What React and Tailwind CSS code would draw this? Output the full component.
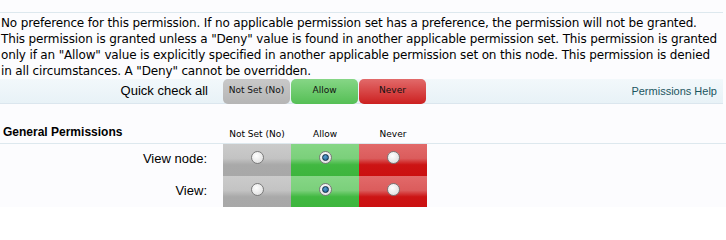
import React from 'react';

const cols = [
  { key: 'unset', label: 'Not Set (No)', cell: 'bg-[linear-gradient(to_bottom,#cbcbcb_0%,#c3c3c3_45%,#a9a9a9_65%,#a8a8a8_100%)]', btn: 'bg-[linear-gradient(to_bottom,#c9c9c9,#b5b5b5)]' },
  { key: 'allow', label: 'Allow', cell: 'bg-[linear-gradient(to_bottom,#86d686_0%,#7bd07b_45%,#41b841_65%,#3db53d_100%)]', btn: 'bg-[linear-gradient(to_bottom,#86d686,#55bf55)]' },
  { key: 'never', label: 'Never', cell: 'bg-[linear-gradient(to_bottom,#e26a6a_0%,#db5c5c_45%,#cc1414_65%,#cb1010_100%)]', btn: 'bg-[linear-gradient(to_bottom,#e26a6a,#cc2020)]' },
];

const perms = [
  { name: 'View node:', value: 'allow' },
  { name: 'View:', value: 'allow' },
];

function Radio({ checked }) {
  return (
    <span className="flex h-[13px] w-[13px] items-center justify-center rounded-full border border-[#7a7a7a] bg-[radial-gradient(circle_at_40%_35%,#ffffff,#d8d8d8)]">
      {checked && <span className="h-[7px] w-[7px] rounded-full border border-[#0c2c44] bg-[radial-gradient(circle_at_40%_35%,#5aa0d0,#1a5a8a)]" />}
    </span>
  );
}

export default function App() {
  return (
    <div className="h-[207px] w-[726px] overflow-hidden bg-[#fcfcfe] font-['DejaVu_Sans',sans-serif] text-[#000]">
      <div className="h-[12px]" />
      <div className="mr-[3px] whitespace-nowrap border-t border-[#dde8ee] pl-[1px] pt-[2px] text-[12px] leading-[16px] tracking-[-0.15px]">
        No preference for this permission. If no applicable permission set has a preference, the permission will not be granted.<br />
        This permission is granted unless a "Deny" value is found in another applicable permission set. This permission is granted<br />
        only if an "Allow" value is explicitly specified in another applicable permission set on this node. This permission is denied<br />
        in all circumstances. A "Deny" cannot be overridden.
      </div>

      <div className="mr-[3px] flex h-[25px] items-center border-b border-[#dbe6ee] bg-[linear-gradient(to_bottom,#f2f8fb,#e8f2f7)]">
        <div className="w-[223px] pr-[15px] text-right font-['Liberation_Sans',sans-serif] text-[13px]">Quick check all</div>
        {cols.map((c) => (
          <button
            key={c.key}
            type="button"
            className={`mr-[1px] flex h-[25px] w-[67px] items-center justify-center rounded-[5px] text-[9px] text-[#111] ${c.btn}`}
          >
            {c.label}
          </button>
        ))}
        <a className="ml-auto pr-[6px] font-['Liberation_Sans',sans-serif] text-[11px] text-[#1b5560]">Permissions Help</a>
      </div>

      <div className="mt-[16px] flex h-[24px] items-end border-b border-[#dde8ee] pb-[2px]">
        <div className="w-[223px] pl-[3px] font-['Liberation_Sans',sans-serif] text-[12px] font-bold">General Permissions</div>
        {cols.map((c) => (
          <div key={c.key} className="w-[68px] text-center text-[9px]">{c.label}</div>
        ))}
      </div>

      {perms.map((p) => (
        <div key={p.name} className="flex h-[32px] items-stretch">
          <div className="flex w-[223px] items-center justify-end pb-[3px] pr-[16px] font-['Liberation_Sans',sans-serif] text-[13px]">{p.name}</div>
          {cols.map((c) => (
            <div key={c.key} className={`flex w-[68px] items-center justify-center pb-[5px] ${c.cell}`}>
              <Radio checked={p.value === c.key} />
            </div>
          ))}
        </div>
      ))}
    </div>
  );
}
